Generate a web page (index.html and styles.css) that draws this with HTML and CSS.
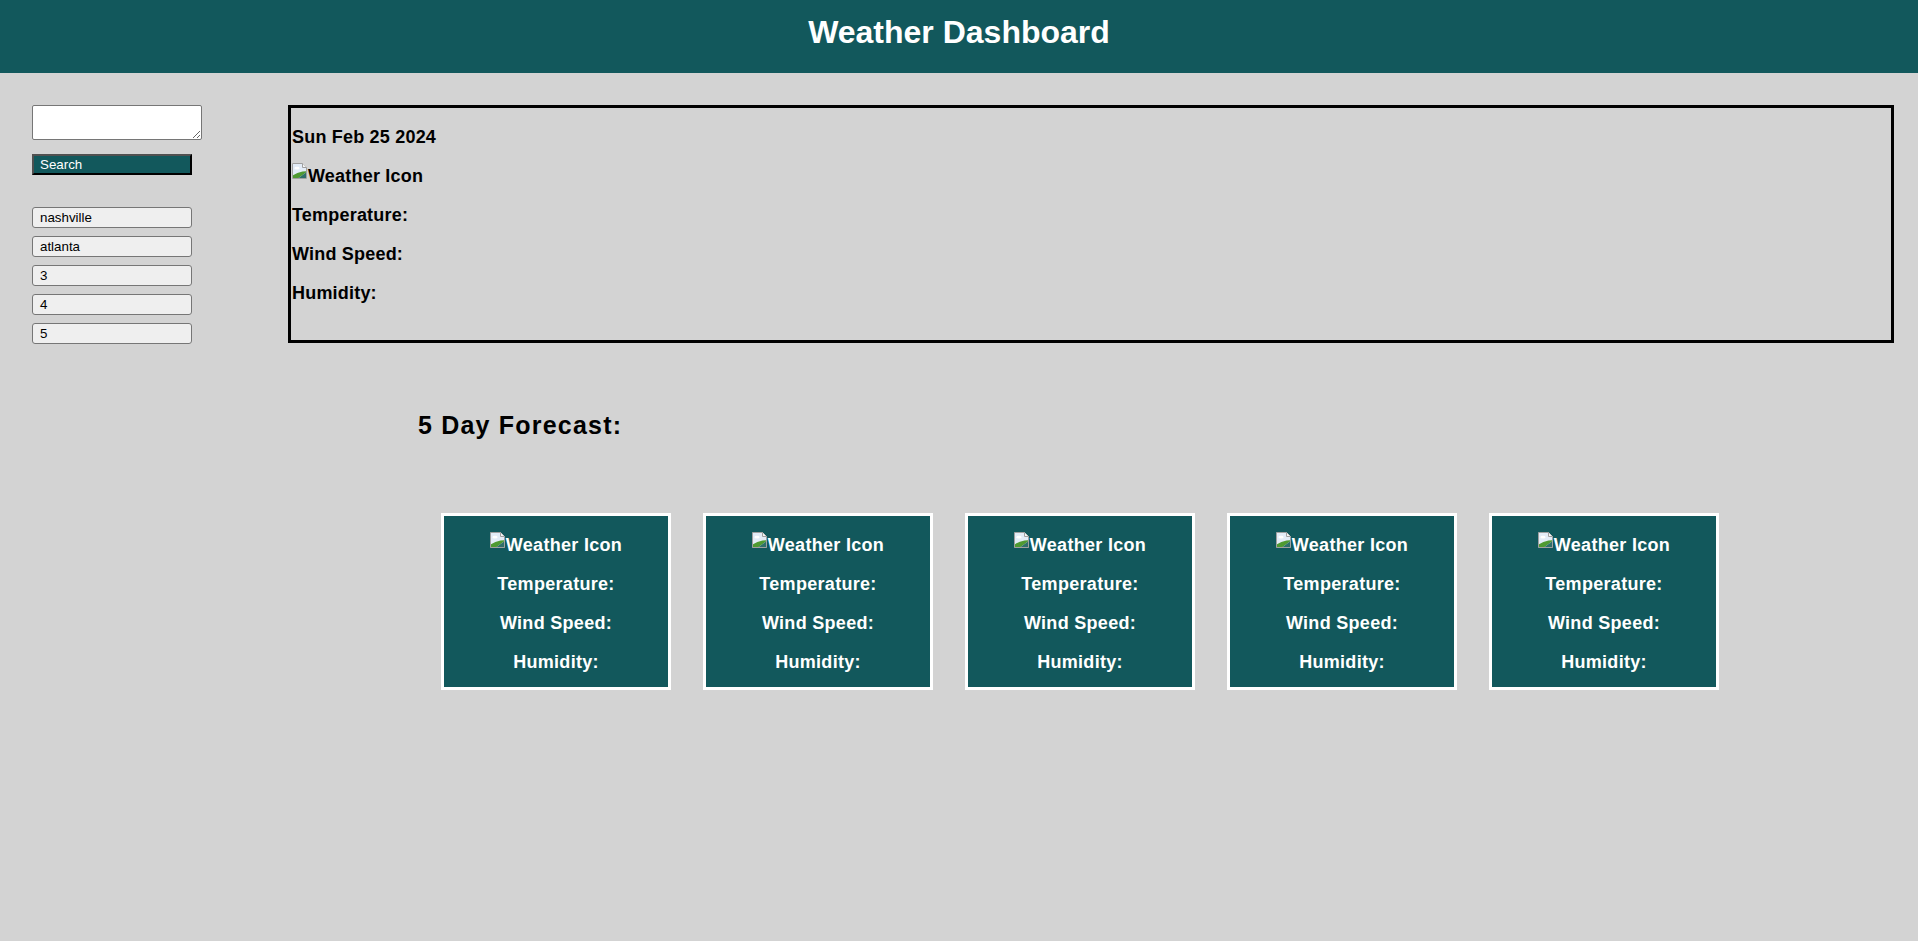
FILE: index.html
```html
<!DOCTYPE html>
<html lang="en">
<head>
<meta charset="utf-8">
<title>Weather Dashboard</title>
<link rel="stylesheet" href="styles.css">
</head>
<body>
<header class="site-header">
  <h1 class="site-title">Weather Dashboard</h1>
</header>
<div class="layout">
  <aside class="sidebar">
    <textarea class="city-input"></textarea>
    <button class="search-btn">Search</button>
    <div class="history">
      <button class="history-btn">nashville</button>
      <button class="history-btn">atlanta</button>
      <button class="history-btn">3</button>
      <button class="history-btn">4</button>
      <button class="history-btn">5</button>
    </div>
  </aside>
  <main class="content">
    <section class="current">
      <p class="line">Sun Feb 25 2024</p>
      <p class="line"><svg class="broken-icon" width="16" height="16" viewBox="0 0 16 16"><path d="M0.5 0.5H10.5L14.5 4.5V15.5H0.5Z" fill="#e3ecf7" stroke="#a0a0a0"/><path d="M10.5 0.5V4.5H14.5" fill="#f4f4f4" stroke="#a0a0a0"/><ellipse cx="5" cy="5.2" rx="2.6" ry="1.4" fill="#ffffff"/><path d="M1 15V12.2Q5 9.6 10.5 8.6L14 8.2V9.6L6.5 15Z" fill="#4f9a32"/><path d="M6.5 15L14 9.6V15Z" fill="#2f6f6a"/></svg>Weather Icon</p>
      <p class="line">Temperature:</p>
      <p class="line">Wind Speed:</p>
      <p class="line">Humidity:</p>
    </section>
    <section class="forecast">
      <h2 class="forecast-title">5 Day Forecast:</h2>
      <div class="cards">
        <div class="card">
          <p class="card-line"><svg class="broken-icon" width="16" height="16" viewBox="0 0 16 16"><path d="M0.5 0.5H10.5L14.5 4.5V15.5H0.5Z" fill="#e3ecf7" stroke="#a0a0a0"/><path d="M10.5 0.5V4.5H14.5" fill="#f4f4f4" stroke="#a0a0a0"/><ellipse cx="5" cy="5.2" rx="2.6" ry="1.4" fill="#ffffff"/><path d="M1 15V12.2Q5 9.6 10.5 8.6L14 8.2V9.6L6.5 15Z" fill="#4f9a32"/><path d="M6.5 15L14 9.6V15Z" fill="#2f6f6a"/></svg>Weather Icon</p>
          <p class="card-line">Temperature:</p>
          <p class="card-line">Wind Speed:</p>
          <p class="card-line">Humidity:</p>
        </div>
        <div class="card">
          <p class="card-line"><svg class="broken-icon" width="16" height="16" viewBox="0 0 16 16"><path d="M0.5 0.5H10.5L14.5 4.5V15.5H0.5Z" fill="#e3ecf7" stroke="#a0a0a0"/><path d="M10.5 0.5V4.5H14.5" fill="#f4f4f4" stroke="#a0a0a0"/><ellipse cx="5" cy="5.2" rx="2.6" ry="1.4" fill="#ffffff"/><path d="M1 15V12.2Q5 9.6 10.5 8.6L14 8.2V9.6L6.5 15Z" fill="#4f9a32"/><path d="M6.5 15L14 9.6V15Z" fill="#2f6f6a"/></svg>Weather Icon</p>
          <p class="card-line">Temperature:</p>
          <p class="card-line">Wind Speed:</p>
          <p class="card-line">Humidity:</p>
        </div>
        <div class="card">
          <p class="card-line"><svg class="broken-icon" width="16" height="16" viewBox="0 0 16 16"><path d="M0.5 0.5H10.5L14.5 4.5V15.5H0.5Z" fill="#e3ecf7" stroke="#a0a0a0"/><path d="M10.5 0.5V4.5H14.5" fill="#f4f4f4" stroke="#a0a0a0"/><ellipse cx="5" cy="5.2" rx="2.6" ry="1.4" fill="#ffffff"/><path d="M1 15V12.2Q5 9.6 10.5 8.6L14 8.2V9.6L6.5 15Z" fill="#4f9a32"/><path d="M6.5 15L14 9.6V15Z" fill="#2f6f6a"/></svg>Weather Icon</p>
          <p class="card-line">Temperature:</p>
          <p class="card-line">Wind Speed:</p>
          <p class="card-line">Humidity:</p>
        </div>
        <div class="card">
          <p class="card-line"><svg class="broken-icon" width="16" height="16" viewBox="0 0 16 16"><path d="M0.5 0.5H10.5L14.5 4.5V15.5H0.5Z" fill="#e3ecf7" stroke="#a0a0a0"/><path d="M10.5 0.5V4.5H14.5" fill="#f4f4f4" stroke="#a0a0a0"/><ellipse cx="5" cy="5.2" rx="2.6" ry="1.4" fill="#ffffff"/><path d="M1 15V12.2Q5 9.6 10.5 8.6L14 8.2V9.6L6.5 15Z" fill="#4f9a32"/><path d="M6.5 15L14 9.6V15Z" fill="#2f6f6a"/></svg>Weather Icon</p>
          <p class="card-line">Temperature:</p>
          <p class="card-line">Wind Speed:</p>
          <p class="card-line">Humidity:</p>
        </div>
        <div class="card">
          <p class="card-line"><svg class="broken-icon" width="16" height="16" viewBox="0 0 16 16"><path d="M0.5 0.5H10.5L14.5 4.5V15.5H0.5Z" fill="#e3ecf7" stroke="#a0a0a0"/><path d="M10.5 0.5V4.5H14.5" fill="#f4f4f4" stroke="#a0a0a0"/><ellipse cx="5" cy="5.2" rx="2.6" ry="1.4" fill="#ffffff"/><path d="M1 15V12.2Q5 9.6 10.5 8.6L14 8.2V9.6L6.5 15Z" fill="#4f9a32"/><path d="M6.5 15L14 9.6V15Z" fill="#2f6f6a"/></svg>Weather Icon</p>
          <p class="card-line">Temperature:</p>
          <p class="card-line">Wind Speed:</p>
          <p class="card-line">Humidity:</p>
        </div>
      </div>
    </section>
  </main>
</div>
</body>
</html>
```
FILE: styles.css
```css
html, body {
  margin: 0;
  padding: 0;
}

body {
  background: #d3d3d3;
  font-family: "Liberation Sans", Arial, sans-serif;
  color: #000;
  min-height: 941px;
}

.site-header {
  background: #12585c;
  height: 73px;
  box-sizing: border-box;
  padding-top: 14px;
  text-align: center;
}

.site-title {
  margin: 0;
  font-size: 32px;
  font-weight: bold;
  color: #fff;
  line-height: 37px;
}

.layout {
  display: flex;
  padding-top: 32px;
}

.sidebar {
  width: 288px;
  flex: none;
  box-sizing: border-box;
  padding-left: 32px;
  display: flex;
  flex-direction: column;
  align-items: flex-start;
}

.city-input {
  box-sizing: border-box;
  width: 170px;
  height: 35px;
  margin: 0;
  border: 1px solid #767676;
  border-radius: 2px;
  background: #fff;
  padding: 2px;
  font-family: "Liberation Mono", monospace;
  font-size: 13px;
}

.search-btn {
  box-sizing: border-box;
  width: 160px;
  height: 21px;
  margin-top: 14px;
  padding: 0 0 0 6px;
  text-align: left;
  background: #12585c;
  color: #fff;
  font-family: "Liberation Sans", Arial, sans-serif;
  font-size: 13.33px;
  border-style: solid;
  border-width: 2px;
  border-color: #505050 #000 #000 #505050;
  line-height: 17px;
}

.history {
  margin-top: 32px;
  display: flex;
  flex-direction: column;
  gap: 8px;
}

.history-btn {
  box-sizing: border-box;
  width: 160px;
  height: 21px;
  margin: 0;
  padding: 0 0 0 7px;
  text-align: left;
  background: #efefef;
  color: #000;
  font-family: "Liberation Sans", Arial, sans-serif;
  font-size: 13.33px;
  line-height: 19px;
  border: 1px solid #767676;
  border-radius: 3px;
}

.content {
  flex: 1;
  padding-right: 24px;
  min-width: 0;
}

.current {
  box-sizing: border-box;
  height: 238px;
  border: 3px solid #000;
  padding: 19px 0 0 1px;
  display: flex;
  flex-direction: column;
  gap: 18px;
}

.line {
  margin: 0;
  font-size: 18px;
  font-weight: bold;
  line-height: 21px;
  letter-spacing: 0.2px;
}

.broken-icon {
  display: inline-block;
  vertical-align: 3px;
  margin-top: -6px;
}

.forecast {
  padding-top: 68px;
}

.forecast-title {
  margin: 0 0 0 130px;
  font-size: 25px;
  letter-spacing: 1.2px;
  font-weight: bold;
  line-height: 29px;
}

.cards {
  margin: 73px 0 0 153px;
  display: flex;
  gap: 32px;
}

.card {
  box-sizing: border-box;
  width: 230px;
  height: 177px;
  background: #12585c;
  border: 3px solid #fff;
  color: #fff;
  padding-top: 19px;
  display: flex;
  flex-direction: column;
  align-items: center;
  gap: 18px;
}

.card-line {
  margin: 0;
  font-size: 18px;
  font-weight: bold;
  line-height: 21px;
  letter-spacing: 0.3px;
  text-align: center;
}
```
